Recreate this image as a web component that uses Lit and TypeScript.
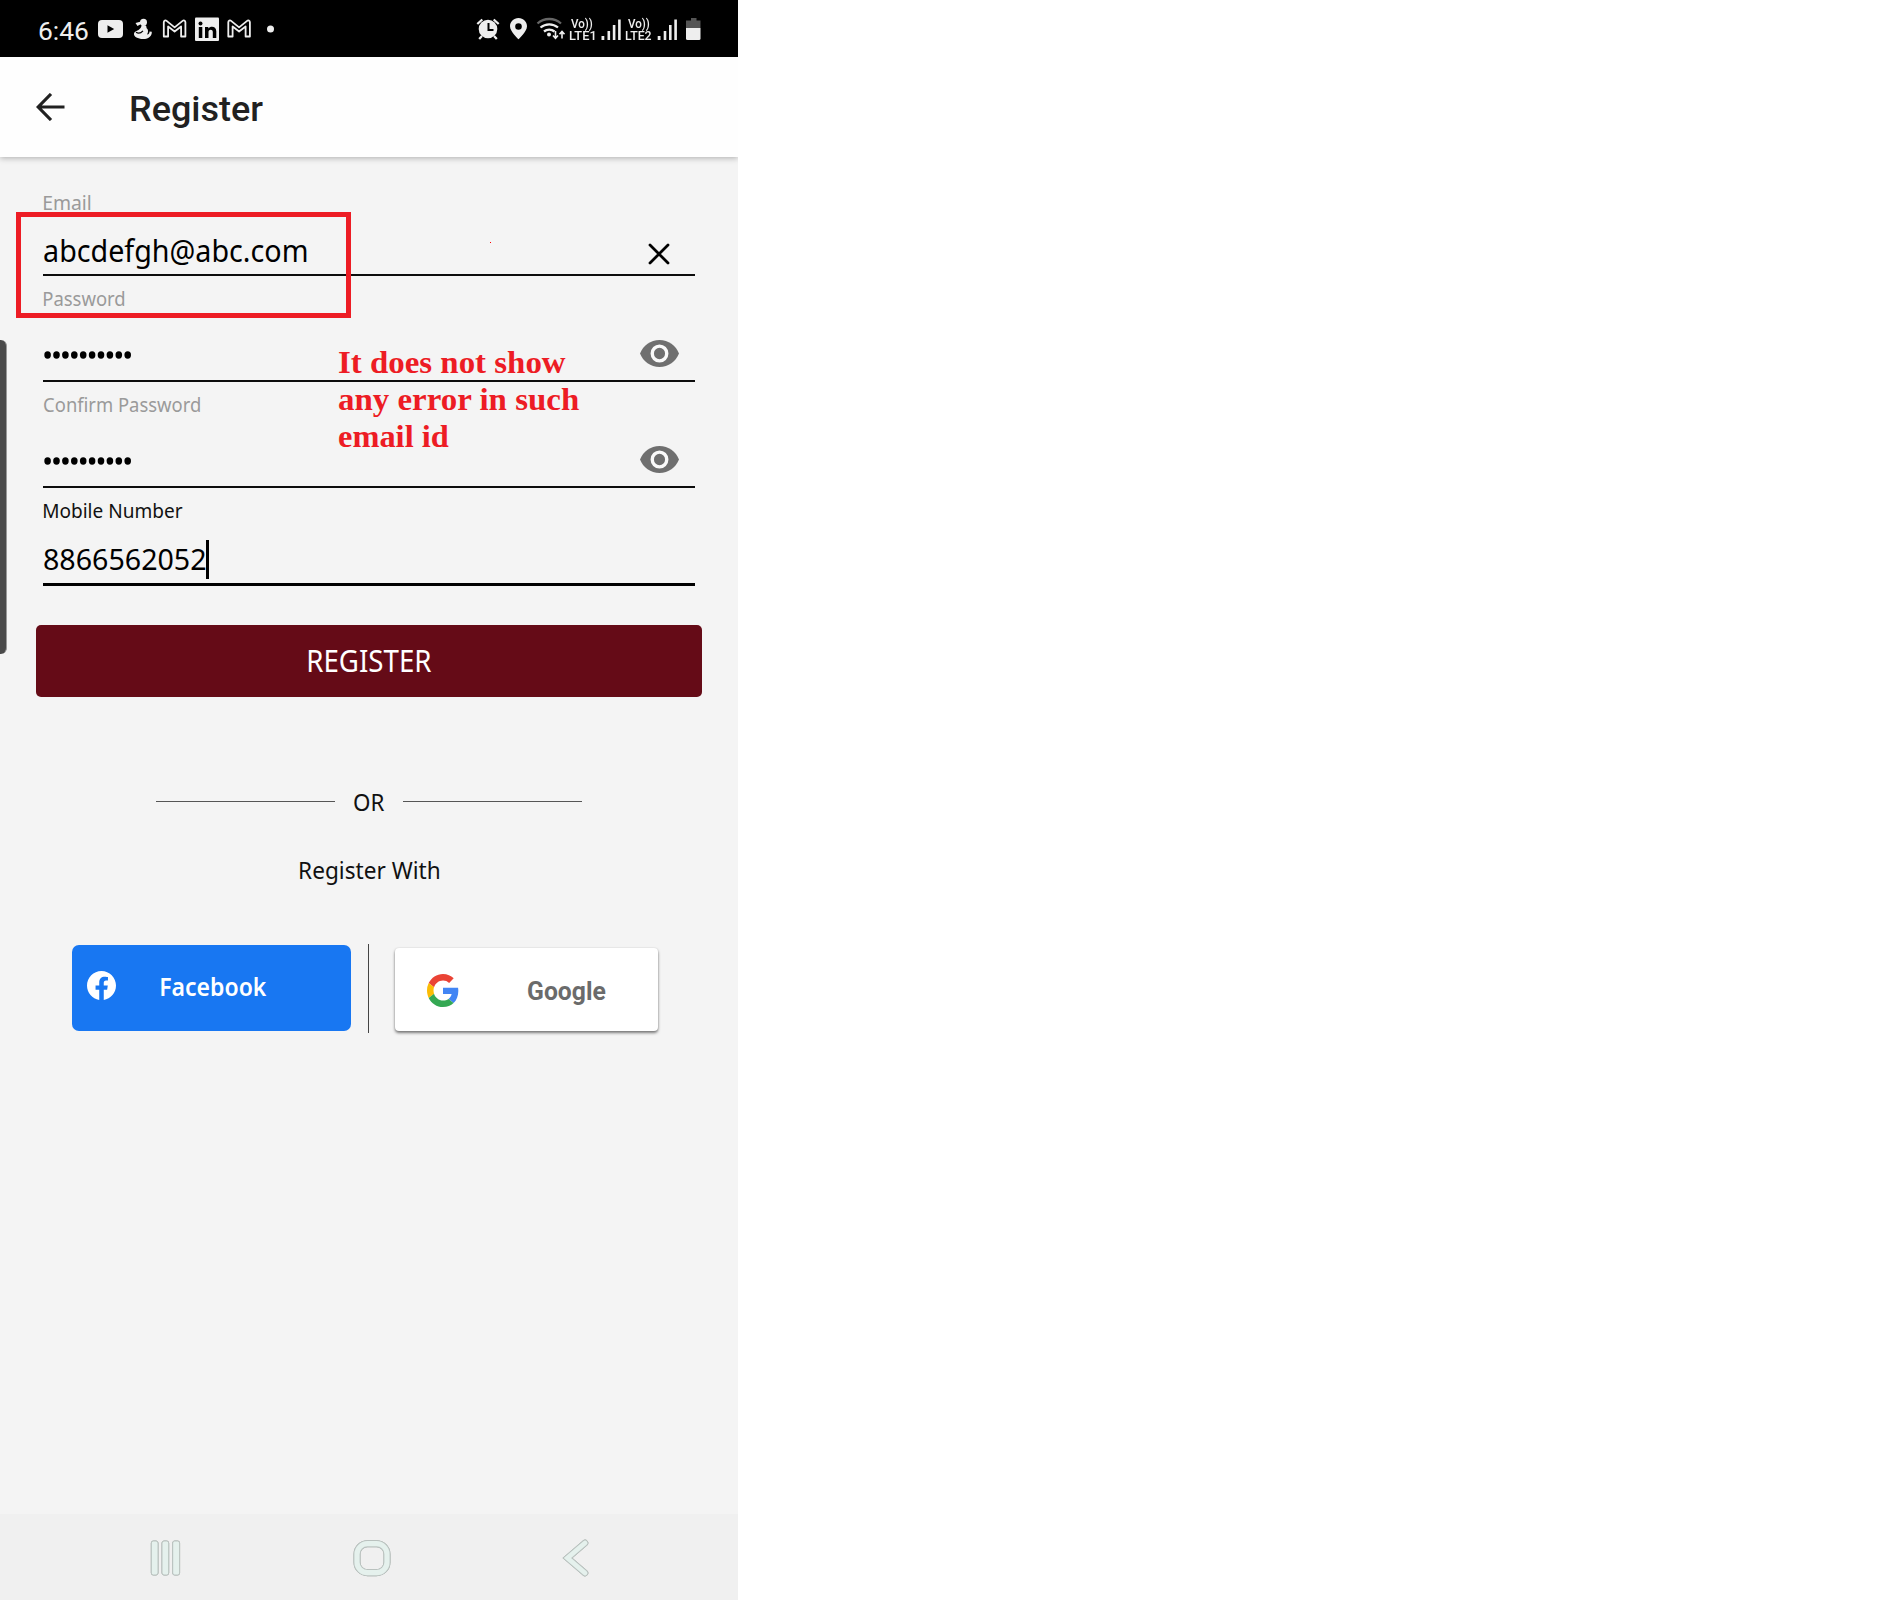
import { LitElement, html, svg, css } from "lit";
import { customElement, property } from "lit/decorators.js";
import { styleMap } from "lit/directives/style-map.js";

const HUMANIST = `"Noto Sans", "Open Sans", sans-serif`;
const ROBOTO = `Roboto, sans-serif`;
const SERIF = `"Liberation Serif", "Times New Roman", serif`;

const ctx = document.createElement("canvas").getContext("2d")!;

/**
 * A single line of text condensed to a given ink width.
 * The box spans from the cap line to the baseline.
 */
@customElement("fit-text")
export class FitText extends LitElement {
  @property() text = "";
  @property() family = HUMANIST;
  @property({ type: Number }) size = 20;
  @property({ type: Number }) weight = 400;
  @property({ type: Number }) width = 100;
  @property({ type: Number }) cap = 15;

  static styles = css`
    :host { display: block; flex: none; }
    .box { display: block; }
    .line { display: inline-block; vertical-align: top; white-space: pre; transform-origin: 0 0; }
  `;

  render() {
    ctx.font = `${this.weight} ${this.size}px ${this.family}`;
    const m = ctx.measureText(this.text);
    const scale = this.width / (m.actualBoundingBoxRight + m.actualBoundingBoxLeft);
    const dx = m.actualBoundingBoxLeft * scale;
    const dy = this.cap / 2 - (m.fontBoundingBoxAscent - m.fontBoundingBoxDescent) / 2;
    return html`<span class="box" style=${styleMap({ width: `${this.width}px`, height: `${this.cap}px` })}
      ><span class="line" style=${styleMap({
        font: `${this.weight} ${this.size}px/${this.cap}px ${this.family}`,
        transform: `translate(${dx}px, ${dy}px) scaleX(${scale})`,
      })}>${this.text}</span></span>`;
  }
}

const t = (text: string, width: number, size: number, cap: number, family = HUMANIST, weight = 400) =>
  html`<fit-text .text=${text} .width=${width} .size=${size} .cap=${cap} .family=${family} .weight=${weight}></fit-text>`;

/** Full-height slice of the status bar, drawn in bar coordinates. */
const slice = (x: number, w: number, body: unknown) =>
  html`<svg class="slice" width=${w} height="57" viewBox="${x} 0 ${w} 57">${body}</svg>`;

const gmail = (x: number) => svg`<path transform="translate(${x} 0)" fill="none" stroke="#eee" stroke-width="1.8" stroke-linejoin="round"
  d="M.8 36.5V22.2c0-1.6 1.7-2.2 2.8-1.3l8 6.5 8-6.5c1.1-.9 2.8-.3 2.8 1.3v14.3h-4.300v-10l-6.500 5-6.500-5v10z"/>`;

const bars = (x: number) => svg`<g fill="#eee" transform="translate(${x} 0)">
  <rect x="0" y="36" width="2.800" height="4"/><rect x="6" y="31" width="2.600" height="9"/>
  <rect x="11.300" y="25" width="2.600" height="15"/><rect x="16.600" y="19.500" width="2.600" height="20.500"/></g>`;

const eye = html`<svg class="eye" width="39" height="27" viewBox="1 4.500 22 15" preserveAspectRatio="none">
  <path fill="#6f6f6f" d="M12 4.500C7 4.500 2.730 7.610 1 12c1.730 4.390 6 7.500 11 7.500s9.270-3.110 11-7.500c-1.730-4.390-6-7.500-11-7.500z"/>
  <circle cx="12" cy="12" r="4.100" fill="none" stroke="#fafafa" stroke-width="1.900"/></svg>`;

const dots = html`<svg class="dots" width="88" height="8" viewBox="0 0 88 8">
  ${Array.from({ length: 10 }, (_, i) => svg`<ellipse cx=${3.600 + i * 8.900} cy="4" rx="3.300" ry="3.700"/>`)}</svg>`;

@customElement("app-root")
export class AppRoot extends LitElement {
  static styles = css`
    :host { display: block; width: 1900px; height: 1600px; background: #fff; overflow: hidden; }
    * { box-sizing: border-box; }
    svg { display: block; flex: none; }
    .phone { position: relative; width: 738px; height: 1600px; background: #f4f4f4; display: flex; flex-direction: column; }
    .status { height: 57px; flex: none; background: #000; color: #eee; display: flex; align-items: flex-start; justify-content: space-between; }
    .group { display: flex; align-items: flex-start; }
    .time { margin: 20.500px 2.500px 0 38.500px; }
    .lte { display: flex; flex-direction: column; align-items: center; gap: 3.200px; padding-top: 19px; width: 27px; margin-right: 5px; }
    .appbar { height: 100px; flex: none; background: #fefefe; box-shadow: 0 1px 6px rgba(0,0,0,.3); display: flex; align-items: flex-start; padding: 36px 0 0 36px; clip-path: inset(0 0 -12px 0); color: #212121; }
    .title { margin: 3px 0 0 66px; }
    .form { padding: 37.500px 43px 0; display: flex; flex-direction: column; }
    .field { border-bottom: 2px solid #0c0c0c; display: flex; flex-direction: column; padding: 0 0 0 .8px; color: #000; }
    .field + .field { padding-top: 15.300px; }
    .label { color: #9a9a9a; padding-left: .4px; }
    .row { display: flex; justify-content: space-between; }
    .email { height: 81.500px; }
    .email .row { margin-top: 31.300px; }
    .email .clear { margin: 2.500px 25.500px 0 0; }
    .pass { height: 106px; }
    .pass .row { margin-top: 33.600px; }
    .pass .dots { margin-top: 11px; }
    .pass .eye { margin-right: 16.500px; }
    .mobile { height: 98px; border-bottom-width: 3px; border-color: #000; }
    .mobile .label { color: #111; }
    .mobile .row { justify-content: flex-start; margin-top: 21px; }
    .mobile .value { margin-top: 9.700px; }
    .caret { width: 3.500px; height: 39px; background: #000; margin: .5px 0 0 0; }
    .submit { height: 72px; margin: 39px 36px 0; background: #650b17; color: #fff; border-radius: 5px; display: flex; justify-content: center; padding: 25px 0 0 1.500px; }
    .or { display: flex; justify-content: center; gap: 18.300px; margin-top: 97px; color: #111; }
    .rule { width: 179.500px; height: 1px; background: #555; margin-top: 7px; }
    .with { display: flex; justify-content: center; margin-top: 50.700px; color: #111; }
    .social { display: flex; align-items: flex-start; padding-left: 72px; margin-top: 65.300px; }
    .fb { width: 279px; height: 86px; border-radius: 7px; background: #1877f2; color: #fff; display: flex; padding: 26px 0 0 15px; margin-top: 1px; }
    .fb .name { margin: 6px 0 0 44.500px; }
    .bar { width: 1px; height: 89px; background: #444; margin: 0 26px 0 17px; }
    .google { width: 262.500px; height: 82.500px; border-radius: 4px; background: #fff; color: #6b6b6b; margin-top: 4.300px; box-shadow: 0 2px 3px rgba(0,0,0,.5), 0 0 2px rgba(0,0,0,.12); display: flex; padding: 26px 0 0 32px; }
    .google .name { margin: 8px 0 0 69px; }
    .nav { margin-top: auto; height: 86px; background: #f0f0f0; display: flex; align-items: flex-start; padding: 25px 0 0 149px; }
    .nav svg { filter: drop-shadow(.5px .7px .5px rgba(90, 100, 95, .55)); }
    .home { margin-left: 171px; }
    .back { margin-left: 171px; }
    .edge { position: absolute; left: 0; top: 340px; width: 7px; height: 314px; background: #4a4a4a; border-radius: 0 6px 6px 0; border-right: 1px solid #999; }
    .mark { position: absolute; left: 16px; top: 212px; width: 335px; height: 106px; border: 5px solid #ed1c24; }
    .speck { position: absolute; left: 490px; top: 242px; width: 1px; height: 1px; background: #f00; }
    .note { position: absolute; left: 338.500px; top: 351.500px; color: #ed1c24; display: flex; flex-direction: column; gap: 16px; }
  `;

  private lte(label: string, width: number) {
    return html`<div class="lte">${t("Vo))", 21.500, 12.500, 9, ROBOTO, 500)}${t(label, width, 12.500, 9, ROBOTO, 500)}</div>`;
  }

  private statusBar() {
    return html`<div class="status">
      <div class="group">
        <div class="time">${t("6:46", 49, 26.500, 19, ROBOTO)}</div>
        ${slice(90, 38, svg`<path fill="#eee" d="M102 20h17q4 0 4 4v10q0 4-4 4h-17q-4 0-4-4V24q0-4 4-4z"/><path d="M107.500 25.200v7.600l6.700-3.800z"/>`)}
        ${slice(128, 30, svg`<circle cx="143.500" cy="22.300" r="3.500" fill="#eee"/><path fill="#eee" d="M135.500 23l5.500-1.500 1 2-4.500 2.500zM141.500 25.300c3-1 5.500.2 5 2.700 2 1.500 2 4.500.500 6.500 2-.2 2.500-1.500 2.500-3l2.300.2c.200 3.800-2.500 7.300-8.800 7.300-5 0-9.500-2.300-9-5.500.300-2 2.500-2.500 4.500-3.500 1.500-1 3-2.700 3-4.700z"/><path fill="none" stroke="#000" stroke-width="1.100" d="M136 32.300c2.500 1.500 5 .8 7-1.500"/>`)}
        ${slice(158, 32, gmail(163))}
        ${slice(190, 34, svg`<rect x="195" y="17.500" width="24" height="23.500" rx="1" fill="#eee"/><circle cx="200.500" cy="23.500" r="2"/><path d="M198.800 27h3.500v11h-3.500zM205 27h3.300v1.600c2-3 8-2.700 8 2.700V38h-3.500v-6c0-3.300-4.300-3-4.300 0v6H205z"/>`)}
        ${slice(224, 60, svg`${gmail(227.500)}<circle cx="270.500" cy="29" r="3.500" fill="#eee"/>`)}
      </div>
      <div class="group">
        ${slice(472, 33, svg`<circle cx="488" cy="29" r="9.300" fill="#eee"/><path fill="none" stroke="#000" stroke-width="2" d="M488.500 23v7h5"/><path fill="none" stroke="#eee" stroke-width="2.300" d="M477.300 24l5-4.500M498.700 24l-5-4.500M482 36l-2.800 3M494 36l2.800 3"/>`)}
        ${slice(505, 28, svg`<path fill="#eee" fill-rule="evenodd" d="M518.500 18c-4.900 0-8.500 3.700-8.500 8.300 0 5.500 8.500 13 8.500 13s8.500-7.500 8.500-13c0-4.600-3.600-8.300-8.500-8.300zm0 5.200a3.300 3.300 0 1 1 0 6.600 3.300 3.300 0 0 1 0-6.600z"/>`)}
        ${slice(533, 35.500, svg`<g fill="none" stroke-width="2.300"><path stroke="#666" d="M537.500 23.500c6.500-6 17-6 23.500 0"/><path stroke="#eee" d="M540.500 27.500c5-4.300 12.500-4.300 17.500 0M544 31.500c3-2.500 7.500-2.500 10.500 0"/></g><circle cx="549" cy="34.500" r="2" fill="#eee"/><path fill="none" stroke="#eee" stroke-width="1.600" d="M555.500 31v7M553 35.500l2.500 2.800 2.500-2.800M562 38.500v-7M559.500 34.200l2.500-2.800 2.500 2.800"/>`)}
        ${this.lte("LTE1", 25.500)}
        ${slice(600.500, 24.500, bars(601))}
        ${this.lte("LTE2", 26.500)}
        ${slice(657, 81, svg`${bars(657.700)}<path fill="#555" d="M691 18h5.500v2.500h4V28h-14.500v-7.500h5z"/><path fill="#eee" d="M686 28h14.500v10.500q0 1.500-1.500 1.500h-11.500q-1.500 0-1.500-1.500z"/>`)}
      </div>
    </div>`;
  }

  render() {
    return html`<div class="phone">
      ${this.statusBar()}
      <div class="appbar">
        <svg width="29" height="28" viewBox="0 0 29 28"><path fill="none" stroke="#212121" stroke-width="3.200" d="M15 1L2.200 14 15 27M2 14h26.500"/></svg>
        <div class="title">${t("Register", 132.500, 35.500, 25, ROBOTO, 500)}</div>
      </div>
      <div class="form">
        <div class="field email">
          <div class="label">${t("Email", 46.500, 20.800, 15)}</div>
          <div class="row">
            ${t("abcdefgh@abc.com", 262.500, 30, 21)}
            <svg class="clear" width="22" height="22" viewBox="0 0 22 22"><path stroke="#000" stroke-width="2.800" stroke-linecap="round" d="M2 2l18 18M20 2L2 20"/></svg>
          </div>
        </div>
        <div class="field pass">
          <div class="label">${t("Password", 81, 20.800, 15)}</div>
          <div class="row">${dots}${eye}</div>
        </div>
        <div class="field pass">
          <div class="label">${t("Confirm Password", 156.500, 20.800, 15)}</div>
          <div class="row">${dots}${eye}</div>
        </div>
        <div class="field mobile">
          <div class="label">${t("Mobile Number", 139, 20.800, 15)}</div>
          <div class="row"><div class="value">${t("8866562052", 162, 29, 21)}</div><div class="caret"></div></div>
        </div>
      </div>
      <div class="submit">${t("REGISTER", 123.500, 30.500, 22)}</div>
      <div class="or"><div class="rule"></div>${t("OR", 30.500, 24, 17)}<div class="rule"></div></div>
      <div class="with">${t("Register With", 139, 24, 17)}</div>
      <div class="social">
        <div class="fb">
          <svg width="29" height="29" viewBox="0 0 24 24"><path fill="#fff" d="M24 12.073C24 5.405 18.627 0 12 0S0 5.405 0 12.073C0 18.100 4.388 23.094 10.125 24v-8.437H7.078v-3.490h3.047V9.413c0-3.026 1.792-4.697 4.533-4.697 1.312 0 2.686.236 2.686.236v2.971H15.830c-1.491 0-1.956.931-1.956 1.886v2.264h3.328l-.532 3.490h-2.796V24C19.612 23.094 24 18.100 24 12.073z"/></svg>
          <div class="name">${t("Facebook", 106, 26, 19, HUMANIST, 600)}</div>
        </div>
        <div class="bar"></div>
        <div class="google">
          <svg width="32" height="33" viewBox="0 0 48 48" preserveAspectRatio="none">
            <path fill="#EA4335" d="M24 9.500c3.540 0 6.710 1.220 9.210 3.600l6.850-6.850C35.900 2.380 30.470 0 24 0 14.620 0 6.510 5.380 2.560 13.220l7.980 6.190C12.430 13.720 17.740 9.500 24 9.500z"/>
            <path fill="#4285F4" d="M46.980 24.550c0-1.570-.15-3.090-.38-4.550H24v9.020h12.940c-.58 2.960-2.260 5.480-4.780 7.180l7.730 6c4.510-4.180 7.090-10.360 7.090-17.650z"/>
            <path fill="#FBBC05" d="M10.530 28.590A14.500 14.500 0 0 1 9.770 24c0-1.600.27-3.140.76-4.590l-7.980-6.190A23.900 23.900 0 0 0 0 24c0 3.880.92 7.540 2.560 10.780z"/>
            <path fill="#34A853" d="M24 48c6.480 0 11.930-2.130 15.890-5.810l-7.730-6c-2.150 1.450-4.920 2.300-8.160 2.300-6.260 0-11.570-4.220-13.470-9.910l-7.980 6.190C6.510 42.620 14.620 48 24 48z"/>
          </svg>
          <div class="name">${t("Google", 78, 25.500, 18, ROBOTO, 700)}</div>
        </div>
      </div>
      <div class="nav">
        <svg width="33" height="39" viewBox="149 1539 33 39"><g fill="#e5f1ed" stroke="#bcc5c2" stroke-width="1">
          <rect x="151.300" y="1541" width="6.700" height="34" rx="2"/><rect x="162" y="1541" width="6.700" height="34" rx="2"/><rect x="172.700" y="1541" width="6.900" height="34" rx="2"/></g></svg>
        <svg class="home" width="38" height="39" viewBox="353 1539 38 39"><g fill="none"><rect x="357" y="1543.700" width="30" height="29" rx="10.500" stroke="#bcc5c2" stroke-width="7"/><rect x="357" y="1543.700" width="30" height="29" rx="10.500" stroke="#e5f1ed" stroke-width="5.200"/></g></svg>
        <svg class="back" width="28" height="39" viewBox="562 1539 28 39"><g fill="none" stroke-linecap="round"><path d="M585 1543L567.500 1558l17.500 15" stroke="#bcc5c2" stroke-width="6.500"/><path d="M585 1543L567.500 1558l17.500 15" stroke="#e5f1ed" stroke-width="4.800"/></g></svg>
      </div>
      <div class="edge"></div>
      <div class="mark"></div>
      <div class="speck"></div>
      <div class="note">
        ${t("It does not show", 226.500, 32, 21, SERIF, 700)}
        ${t("any error in such", 241, 32, 21, SERIF, 700)}
        ${t("email id", 110, 32, 21, SERIF, 700)}
      </div>
    </div>`;
  }
}
